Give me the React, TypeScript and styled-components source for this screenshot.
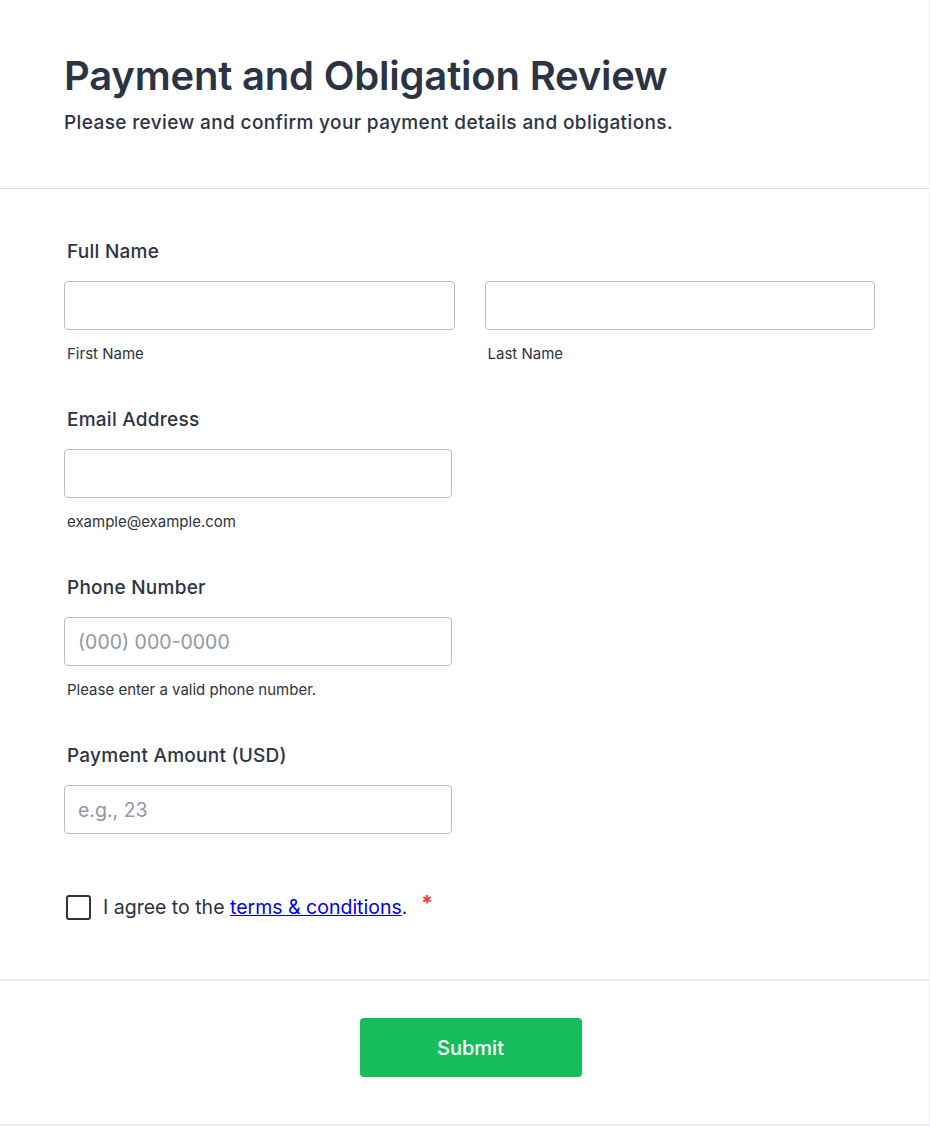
import React from 'react';
import styled, { createGlobalStyle } from 'styled-components';

const GlobalStyle = createGlobalStyle`
    body {
        margin: 0;
        background: #ffffff;
        font-family: Inter, "Noto Sans", sans-serif;
        color: #2c3345;
    }
`;

const Page = styled.div`
    width: 930px;
    min-height: 1127px;
    box-sizing: border-box;
    border-right: 1px solid #f0f0f4;
`;

const Header = styled.header`
    padding: 52px 64px 53px;
    border-bottom: 1px solid #dcdce8;
`;

const Title = styled.h1`
    margin: 0;
    font-size: 40px;
    line-height: 48px;
    font-weight: 600;
    letter-spacing: -0.2px;
`;

const Subtitle = styled.p`
    margin: 11px 0 0;
    font-size: 19px;
    line-height: 24px;
    font-weight: 500;
    letter-spacing: 0.38px;
`;

const FormBody = styled.form`
    padding: 51px 54px 59px 64px;
    display: flex;
    flex-direction: column;
    gap: 45px;
`;

const Field = styled.div<{ $wide?: boolean }>`
    display: flex;
    flex-direction: column;
    width: ${p => (p.$wide ? '100%' : '388px')};
`;

const Label = styled.label`
    padding-left: 3px;
    font-size: 19px;
    line-height: 24px;
    font-weight: 500;
    letter-spacing: 0.25px;
    margin-bottom: 17px;
`;

const NameRow = styled.div`
    display: grid;
    grid-template-columns: 1fr 1fr;
    column-gap: 30px;
`;

const InputWrap = styled.div`
    display: flex;
    flex-direction: column;
`;

const Input = styled.input`
    box-sizing: border-box;
    width: 100%;
    height: 49px;
    border: 1px solid #b8bdc9;
    border-radius: 4px;
    padding: 0 13px;
    font-family: Inter, "Noto Sans", sans-serif;
    font-size: 19.5px;
    color: #2c3345;
    outline: none;

    &::placeholder {
        color: #8f97a8;
    }
`;

const SubLabel = styled.span`
    padding-left: 3px;
    margin-top: 15px;
    font-size: 15px;
    line-height: 18px;
`;

const AgreeRow = styled.label`
    display: flex;
    align-items: center;
    gap: 12px;
    margin-top: 15px;
    padding-left: 2px;
    font-size: 19.5px;
    line-height: 26px;
`;

const Box = styled.span`
    box-sizing: border-box;
    width: 25px;
    height: 25px;
    border: 2px solid #2c3345;
    border-radius: 3px;
    flex-shrink: 0;
`;

const TermsLink = styled.a`
    color: #0000ee;
    text-decoration: underline;
`;

const Required = styled.span`
    color: #f23a3c;
    margin-left: 14px;
    font-size: 21px;
    font-weight: 700;
    position: relative;
    top: -3px;
`;

const Footer = styled.footer`
    border-top: 2px solid #ececf2;
    border-bottom: 2px solid #f0f0f4;
    padding: 37px 0 47px;
    display: flex;
    justify-content: center;
`;

const SubmitButton = styled.button`
    width: 222px;
    height: 59px;
    border: none;
    border-radius: 4px;
    background: #18bd5b;
    color: #ffffff;
    font-family: Inter, "Noto Sans", sans-serif;
    font-size: 20px;
    font-weight: 500;
    cursor: pointer;
    margin-left: 12px;
`;

const App: React.FC = () => {
    return (
        <>
            <GlobalStyle />
            <Page>
                <Header>
                    <Title>Payment and Obligation Review</Title>
                    <Subtitle>Please review and confirm your payment details and obligations.</Subtitle>
                </Header>
                <FormBody onSubmit={evt => evt.preventDefault()}>
                    <Field $wide>
                        <Label>Full Name</Label>
                        <NameRow>
                            <InputWrap>
                                <Input type="text" name="first" />
                                <SubLabel>First Name</SubLabel>
                            </InputWrap>
                            <InputWrap>
                                <Input type="text" name="last" />
                                <SubLabel>Last Name</SubLabel>
                            </InputWrap>
                        </NameRow>
                    </Field>
                    <Field>
                        <Label>Email Address</Label>
                        <Input type="email" name="email" />
                        <SubLabel>example@example.com</SubLabel>
                    </Field>
                    <Field>
                        <Label>Phone Number</Label>
                        <Input type="tel" name="phone" placeholder="(000) 000-0000" />
                        <SubLabel>Please enter a valid phone number.</SubLabel>
                    </Field>
                    <Field>
                        <Label>Payment Amount (USD)</Label>
                        <Input type="text" name="amount" placeholder="e.g., 23" />
                    </Field>
                    <AgreeRow>
                        <Box />
                        <span>
                            I agree to the <TermsLink href="#">terms &amp; conditions</TermsLink>.
                            <Required>*</Required>
                        </span>
                    </AgreeRow>
                </FormBody>
                <Footer>
                    <SubmitButton type="submit">Submit</SubmitButton>
                </Footer>
            </Page>
        </>
    );
};

export default App;
